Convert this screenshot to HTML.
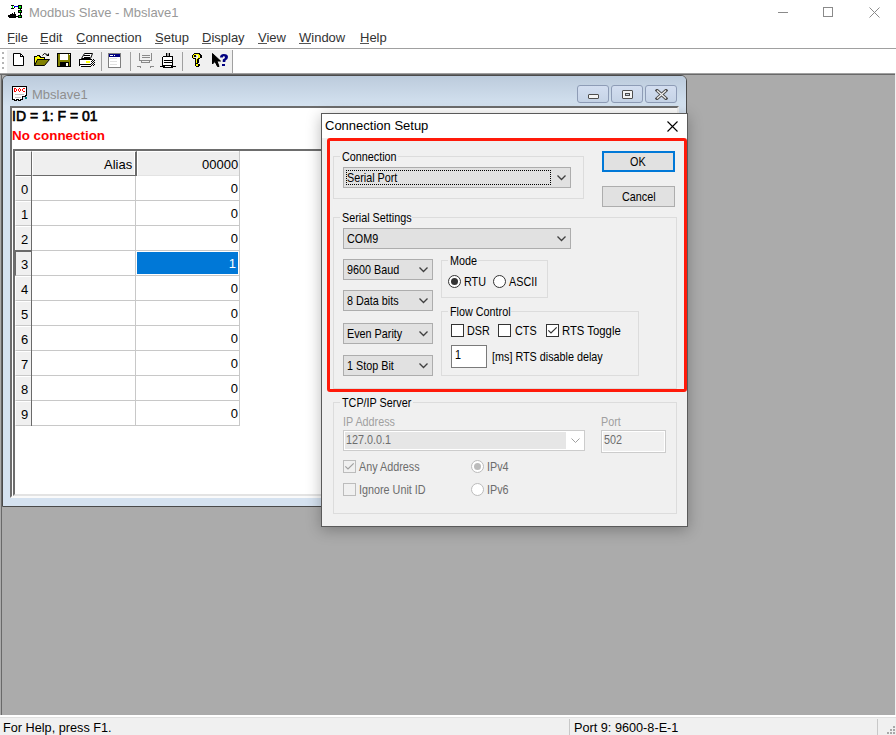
<!DOCTYPE html>
<html><head><meta charset="utf-8">
<style>
*{box-sizing:border-box}
body{margin:0;width:896px;height:735px;position:relative;overflow:hidden;background:#fff;font-family:"Liberation Sans",sans-serif;color:#000}
.a{position:absolute}
.t{position:absolute;white-space:pre;line-height:1}
.u{text-decoration:underline;text-underline-offset:2px}
.dt{position:absolute;white-space:pre;line-height:1;font-size:13px;transform:translateY(-2px) scaleX(0.83);transform-origin:0 0}
.grp{position:absolute;border:1px solid #dcdcdc}
.lbl{position:absolute;height:12px;background:#f0f0f0}
.combo{position:absolute;height:21px;background:#e1e1e1;border:1px solid #adadad}
.combo .dt{position:absolute}
.chev{position:absolute;right:4px;top:7px}
.focus{position:absolute;border:1px dotted #000}
.chk{position:absolute;width:13px;height:13px;background:#fff;border:1px solid #333}
.chk.dis{border-color:#bcbcbc;background:#f0f0f0}
.radio{position:absolute;width:13px;height:13px;background:#fff;border:1px solid #333;border-radius:50%}
.radio.dis{border-color:#bcbcbc}
.dot{position:absolute;left:2px;top:2px;width:7px;height:7px;border-radius:50%;background:#333}
.cbtn{position:absolute;top:85px;width:32px;height:18px;border:1px solid #8e9cb6;border-radius:3px;background:linear-gradient(#d3def0,#c5d3e6)}
</style></head><body>

<!-- ===== Title bar ===== -->
<div class="t" style="left:29px;top:6px;font-size:13px;color:#999">Modbus Slave - Mbslave1</div>

<svg class="a" style="left:770px;top:0" width="126" height="27">
 <path d="M8 12.5H18" stroke="#8a8a8a" stroke-width="1"/>
 <rect x="53.5" y="7.5" width="9" height="9" fill="none" stroke="#8a8a8a"/>
 <path d="M99.5 7.5L109.5 17.5M109.5 7.5L99.5 17.5" stroke="#8a8a8a" stroke-width="1"/>
</svg>
<!-- ===== Menu ===== -->
<div class="t" style="left:7px;top:31px;font-size:13px;color:#333">File</div>
<div class="t" style="left:40px;top:31px;font-size:13px;color:#333">Edit</div>
<div class="t" style="left:76px;top:31px;font-size:13px;color:#333">Connection</div>
<div class="t" style="left:155px;top:31px;font-size:13px;color:#333">Setup</div>
<div class="t" style="left:202px;top:31px;font-size:13px;color:#333">Display</div>
<div class="t" style="left:258px;top:31px;font-size:13px;color:#333">View</div>
<div class="t" style="left:299px;top:31px;font-size:13px;color:#333">Window</div>
<div class="t" style="left:360px;top:31px;font-size:13px;color:#333">Help</div>
<div class="a" style="left:8px;top:43px;width:7px;height:1px;background:#555"></div>
<div class="a" style="left:40px;top:43px;width:8px;height:1px;background:#555"></div>
<div class="a" style="left:77px;top:43px;width:9px;height:1px;background:#555"></div>
<div class="a" style="left:155px;top:43px;width:8px;height:1px;background:#555"></div>
<div class="a" style="left:202px;top:43px;width:9px;height:1px;background:#555"></div>
<div class="a" style="left:258px;top:43px;width:9px;height:1px;background:#555"></div>
<div class="a" style="left:299px;top:43px;width:12px;height:1px;background:#555"></div>
<div class="a" style="left:360px;top:43px;width:9px;height:1px;background:#555"></div>
<div class="a" style="left:0;top:48px;width:896px;height:1px;background:#a0a0a0"></div>

<!-- ===== Toolbar ===== -->
<div class="a" style="left:7px;top:50px;width:226px;height:23px;background:#f0f0f0"></div>
<div class="a" style="left:232px;top:50px;width:1px;height:23px;background:#a0a0a0"></div>

<!-- toolbar icons -->
<svg class="a" style="left:0;top:0" width="240" height="73" shape-rendering="crispEdges">
 <!-- gripper -->
 <g fill="#b4b4b4"><rect x="2" y="52" width="2" height="2"/><rect x="2" y="57" width="2" height="2"/><rect x="2" y="62" width="2" height="2"/><rect x="2" y="67" width="2" height="2"/></g>
 <!-- app icon (title) -->
 <g fill="#000">
  <rect x="11" y="5" width="3" height="1"/><rect x="11" y="8" width="3" height="1"/>
  <rect x="18" y="5" width="4" height="4"/><rect x="20" y="9" width="1" height="1"/>
  <rect x="18" y="10" width="4" height="3"/><rect x="20" y="13" width="1" height="2"/>
  <rect x="18" y="15" width="4" height="3"/>
  <rect x="14" y="7" width="1" height="1"/>
  <path d="M8 15H10V14H12V13H13V14H14V12H15V14H16V16H18V17H16V18H9V17H8Z"/>
 </g>
 <rect x="14" y="6" width="4" height="1" fill="#0000ff"/>
 <g fill="#00ff00"><rect x="12" y="6" width="1" height="2"/><rect x="19" y="6" width="2" height="2"/><rect x="19" y="11" width="2" height="1"/><rect x="19" y="16" width="2" height="1"/></g>
 <!-- new doc -->
 <path d="M13.5 53.5H20.5L23.5 56.5V65.5H13.5Z" fill="#fff" stroke="#000" shape-rendering="auto"/>
 <path d="M20.5 53.5V56.5H23.5" fill="none" stroke="#000"/>
 <!-- open folder -->
 <path d="M34.5 56.5H36.5L37.5 55.5H39.5L40.5 57.5H44.5V59.5H37.5L35 65.5H34.5Z" fill="#ffff00" stroke="#000"/>
 <path d="M37.5 59.5H49.5L44.5 65.5H34.5Z" fill="#808000" stroke="#000" shape-rendering="auto"/>
 <path d="M42.5 55.5Q44 52 47 54.5" fill="none" stroke="#000" shape-rendering="auto"/>
 <path d="M46 56H49V53Z" fill="#000" shape-rendering="auto"/>
 <!-- floppy -->
 <rect x="57" y="53" width="14" height="14" fill="#000"/>
 <rect x="58" y="54" width="12" height="12" fill="#808000"/>
 <rect x="60" y="54" width="8" height="6" fill="#fff"/>
 <rect x="60" y="62" width="9" height="5" fill="#000"/>
 <rect x="66" y="63" width="2" height="3" fill="#fff"/>
 <rect x="69" y="54" width="1" height="1" fill="#fff"/>
 <!-- printer -->
 <path d="M84.5 53.5H92.5L90.5 58.5H81.5Z" fill="#fff" stroke="#000" shape-rendering="auto"/>
 <path d="M84 55.5H90M83.5 57H89.5" stroke="#000" fill="none"/>
 <rect x="79" y="59" width="12" height="1" fill="#000"/>
 <rect x="79" y="59" width="1" height="7" fill="#000"/>
 <rect x="80" y="60" width="12" height="6" fill="#fff"/>
 <rect x="80" y="64" width="11" height="1" fill="#000"/>
 <rect x="86" y="61" width="4" height="2" fill="#ffff00"/>
 <rect x="81" y="66" width="10" height="1" fill="#000"/>
 <g fill="#000"><rect x="91" y="59" width="1" height="1"/><rect x="93" y="59" width="1" height="1"/><rect x="92" y="60" width="1" height="1"/><rect x="94" y="60" width="1" height="1"/><rect x="91" y="61" width="1" height="1"/><rect x="93" y="61" width="1" height="1"/><rect x="92" y="62" width="1" height="1"/><rect x="94" y="62" width="1" height="1"/><rect x="91" y="63" width="1" height="1"/><rect x="93" y="63" width="1" height="1"/><rect x="92" y="64" width="1" height="1"/><rect x="94" y="64" width="1" height="1"/><rect x="91" y="65" width="1" height="1"/><rect x="93" y="65" width="1" height="1"/></g>
 <!-- separators -->
 <rect x="101" y="52" width="1" height="19" fill="#a0a0a0"/>
 <rect x="130" y="52" width="1" height="19" fill="#a0a0a0"/>
 <rect x="182" y="52" width="1" height="19" fill="#a0a0a0"/>
 <!-- window icon -->
 <rect x="108.5" y="53.5" width="12" height="14" fill="#fff" stroke="#808080"/>
 <rect x="109" y="54" width="11" height="3" fill="#000080"/>
 <rect x="110" y="55" width="3" height="1" fill="#fff"/><rect x="114" y="55" width="1" height="1" fill="#fff"/>
 <g fill="#e0e0e0"><rect x="110" y="58" width="7" height="1"/><rect x="110" y="61" width="7" height="1"/><rect x="110" y="64" width="7" height="1"/></g>
 <!-- disabled device -->
 <g fill="none" stroke="#8a8a8a">
  <path d="M139.5 53V60.5H151.5V53"/><path d="M141.5 55.5H149.5M141.5 57.5H149.5"/>
  <path d="M141.5 60.5V62.5H149.5V60.5"/>
  <path d="M137 66.5H140.5V68M154 66.5H150.5V68"/>
 </g>
 <!-- connector -->
 <g fill="#000">
  <rect x="166" y="53" width="1" height="3"/><rect x="169" y="53" width="1" height="3"/>
  <rect x="163" y="56" width="10" height="1"/>
  <rect x="162" y="57" width="1" height="9"/><rect x="172" y="57" width="1" height="9"/>
  <rect x="164" y="60" width="8" height="1"/><rect x="164" y="62" width="8" height="1"/>
  <rect x="163" y="65" width="10" height="3"/>
  <rect x="160" y="66" width="3" height="1"/><rect x="173" y="66" width="3" height="1"/>
 </g>
 <rect x="167" y="53" width="2" height="3" fill="#a0a0a0"/>
 <rect x="163" y="57" width="9" height="3" fill="#fff"/><rect x="163" y="61" width="9" height="1" fill="#fff"/><rect x="163" y="63" width="9" height="2" fill="#fff"/>
 <rect x="165" y="66" width="6" height="1" fill="#fff"/>
 <!-- help ? -->
 <g fill="#000">
  <rect x="194" y="53" width="6" height="1"/>
  <rect x="193" y="54" width="1" height="1"/><rect x="199" y="54" width="2" height="1"/>
  <rect x="192" y="55" width="1" height="3"/><rect x="200" y="55" width="2" height="3"/>
  <rect x="194" y="55" width="2" height="2"/>
  <rect x="193" y="58" width="2" height="1"/><rect x="198" y="58" width="2" height="1"/>
  <rect x="195" y="58" width="1" height="6"/><rect x="197" y="59" width="2" height="4"/>
  <rect x="195" y="63" width="3" height="1"/>
  <rect x="195" y="64" width="1" height="2"/><rect x="198" y="64" width="2" height="2"/>
  <rect x="196" y="66" width="3" height="1"/>
 </g>
 <g fill="#ffff00">
  <rect x="194" y="54" width="5" height="1"/>
  <rect x="193" y="55" width="1" height="3"/>
  <rect x="198" y="55" width="2" height="3"/>
  <rect x="197" y="58" width="1" height="1"/>
  <rect x="196" y="59" width="1" height="4"/>
  <rect x="196" y="64" width="2" height="2"/>
 </g>
 <rect x="196" y="56" width="1" height="1" fill="#c8c8c8"/>
 <!-- context help -->
 <path d="M212.5 53.5V64L215 61.5L217.5 66.5H219L217 61H220.5Z" fill="#000" stroke="#000" shape-rendering="auto"/>
 <path d="M220 57.5Q220 54 223.8 54Q228 54 228 57Q228 59.3 225.5 60.5L225.3 62H222.7L222.8 59.5Q225 58.5 225 57.3Q225 56.3 223.8 56.3Q222.8 56.3 222.8 57.5Z" fill="#000080" shape-rendering="auto"/>
 <rect x="222" y="63.5" width="3" height="2" fill="#000080"/>
</svg>
<!-- ===== MDI client ===== -->
<div class="a" style="left:0;top:73px;width:896px;height:642px;background:#ababab"></div>
<div class="a" style="left:0;top:73px;width:896px;height:1px;background:#a0a0a0"></div>
<div class="a" style="left:0;top:74px;width:896px;height:1px;background:#696969"></div>
<div class="a" style="left:1px;top:74px;width:1px;height:641px;background:#696969"></div>

<!-- ===== MDI child ===== -->
<div class="a" style="left:2px;top:75px;width:685px;height:432px;background:#d5e2f0;border:1px solid #4a4a4a;border-radius:6px 6px 0 0"></div>
<div class="a" style="left:3px;top:76px;width:683px;height:30px;background:linear-gradient(#bccbdc,#d4e2f0);border-radius:5px 5px 0 0"></div>
<div class="t" style="left:32px;top:88px;font-size:13px;color:#8f8f8f">Mbslave1</div>
<svg class="a" style="left:0;top:80px" width="40" height="26" shape-rendering="crispEdges">
 <path d="M12.5 6.5H26.5V15.5L25.5 15.5V16.5H22.5V19.5H20.5V20.5H18.5V19.5H16.5V20.5H14.5V19.5H12.5Z" fill="#fff" stroke="#000"/>
 <g fill="#ff0000">
  <rect x="14" y="8" width="1" height="4"/><rect x="15" y="8" width="1" height="1"/><rect x="15" y="11" width="1" height="1"/><rect x="16" y="9" width="1" height="2"/>
  <rect x="19" y="8" width="1" height="1"/><rect x="18" y="9" width="1" height="2"/><rect x="20" y="9" width="1" height="2"/><rect x="19" y="11" width="1" height="1"/>
  <rect x="23" y="8" width="2" height="1"/><rect x="22" y="9" width="1" height="2"/><rect x="23" y="11" width="2" height="1"/>
 </g>
 <g fill="#c0c0c0"><rect x="15" y="14" width="9" height="1"/><rect x="15" y="17" width="6" height="1"/></g>
 <rect x="25" y="17" width="2" height="2" fill="#008080"/>
</svg>
<div class="cbtn" style="left:577px"><div class="a" style="left:10px;top:8px;width:11px;height:5px;border:1px solid #4e4e4e;background:#f4f4f4;border-radius:1px"></div></div>
<div class="cbtn" style="left:611px"><div class="a" style="left:10px;top:4px;width:11px;height:9px;border:1px solid #4e4e4e;background:#f4f4f4;border-radius:1px"><div class="a" style="left:2px;top:2px;width:5px;height:3px;border:1px solid #4e4e4e;background:#c8d4e4"></div></div></div>
<div class="cbtn" style="left:645px"><svg class="a" style="left:9px;top:3px" width="13" height="11"><path d="M2 1.5L11 9.5M11 1.5L2 9.5" stroke="#4e4e4e" stroke-width="3.2" stroke-linecap="square"/><path d="M2 1.5L11 9.5M11 1.5L2 9.5" stroke="#f4f4f4" stroke-width="1.2"/></svg></div>

<div class="a" style="left:10px;top:106px;width:669px;height:392px;background:#fff;border-top:2px solid #6d6d6d;border-left:2px solid #6d6d6d;border-bottom:2px solid #fafafa;border-right:2px solid #f0f0f0"></div>
<div class="t" style="left:12px;top:109px;font-size:14px;-webkit-text-stroke:0.6px #000">ID = 1: F = 01</div>
<div class="t" style="left:12px;top:129px;font-size:13.4px;font-weight:bold;color:#ff0000">No connection</div>

<!-- ===== Grid ===== -->
<div class="a" style="left:13px;top:149px;width:664px;height:347px;border-top:2px solid #6d6d6d;border-left:2px solid #6d6d6d;border-bottom:2px solid #e3e3e3;border-right:2px solid #e3e3e3"></div>
<div class="a" style="left:15px;top:151px;width:17px;height:25px;background:#efefef;border-top:1px solid #fff;border-left:1px solid #fff;border-right:1px solid #6a6a6a;border-bottom:1px solid #6a6a6a"></div>
<div class="a" style="left:32px;top:151px;width:105px;height:25px;background:#efefef;border-top:1px solid #fff;border-left:1px solid #fff;border-right:2px solid #6a6a6a;border-bottom:1px solid #6a6a6a;box-shadow:inset -1px 0 0 #fff"></div>
<div class="a" style="left:137px;top:151px;width:103px;height:25px;background:#efefef;border-top:1px solid #fff;border-left:1px solid #fff;border-right:1px solid #d0d0d0;border-bottom:1px solid #e3e3e3"></div>
<div class="t" style="left:104px;top:158px;font-size:13px">Alias</div>
<div class="t" style="left:202px;top:158px;font-size:13px">00000</div>
<div class="a" style="left:31px;top:176px;width:1px;height:250px;background:#6a6a6a"></div>
<div class="a" style="left:135px;top:176px;width:1px;height:250px;background:#c8c8c8"></div>
<div class="a" style="left:239px;top:151px;width:1px;height:275px;background:#c8c8c8"></div>
<div class="a" style="left:32px;top:200px;width:208px;height:1px;background:#c8c8c8"></div>
<div class="a" style="left:32px;top:225px;width:208px;height:1px;background:#c8c8c8"></div>
<div class="a" style="left:32px;top:250px;width:208px;height:1px;background:#c8c8c8"></div>
<div class="a" style="left:32px;top:275px;width:208px;height:1px;background:#c8c8c8"></div>
<div class="a" style="left:32px;top:300px;width:208px;height:1px;background:#c8c8c8"></div>
<div class="a" style="left:32px;top:325px;width:208px;height:1px;background:#c8c8c8"></div>
<div class="a" style="left:32px;top:350px;width:208px;height:1px;background:#c8c8c8"></div>
<div class="a" style="left:32px;top:375px;width:208px;height:1px;background:#c8c8c8"></div>
<div class="a" style="left:32px;top:400px;width:208px;height:1px;background:#c8c8c8"></div>
<div class="a" style="left:32px;top:425px;width:208px;height:1px;background:#c8c8c8"></div>
<div class="a" style="left:137px;top:252px;width:101px;height:22px;background:#0078d7"></div>
<div class="a" style="left:15px;top:176px;width:16px;height:25px;background:#f0f0f0;border-top:1px solid #fff;border-left:1px solid #fff;border-bottom:1px solid #c8c8c8"></div>
<div class="t" style="left:21px;top:183px;font-size:13px">0</div>
<div class="t" style="left:200px;top:182px;font-size:13px;width:38px;text-align:right">0</div>
<div class="a" style="left:15px;top:201px;width:16px;height:25px;background:#f0f0f0;border-top:1px solid #fff;border-left:1px solid #fff;border-bottom:1px solid #c8c8c8"></div>
<div class="t" style="left:21px;top:208px;font-size:13px">1</div>
<div class="t" style="left:200px;top:207px;font-size:13px;width:38px;text-align:right">0</div>
<div class="a" style="left:15px;top:226px;width:16px;height:25px;background:#f0f0f0;border-top:1px solid #fff;border-left:1px solid #fff;border-bottom:1px solid #c8c8c8"></div>
<div class="t" style="left:21px;top:233px;font-size:13px">2</div>
<div class="t" style="left:200px;top:232px;font-size:13px;width:38px;text-align:right">0</div>
<div class="a" style="left:15px;top:250px;width:16px;height:26px;background:#f0f0f0;border-top:2px solid #6a6a6a;border-left:1px solid #6a6a6a;border-bottom:1px solid #c8c8c8"></div>
<div class="t" style="left:21px;top:258px;font-size:13px">3</div>
<div class="t" style="left:198px;top:257px;font-size:13px;width:38px;text-align:right;color:#fff">1</div>
<div class="a" style="left:15px;top:276px;width:16px;height:25px;background:#f0f0f0;border-top:1px solid #fff;border-left:1px solid #fff;border-bottom:1px solid #c8c8c8"></div>
<div class="t" style="left:21px;top:283px;font-size:13px">4</div>
<div class="t" style="left:200px;top:282px;font-size:13px;width:38px;text-align:right">0</div>
<div class="a" style="left:15px;top:301px;width:16px;height:25px;background:#f0f0f0;border-top:1px solid #fff;border-left:1px solid #fff;border-bottom:1px solid #c8c8c8"></div>
<div class="t" style="left:21px;top:308px;font-size:13px">5</div>
<div class="t" style="left:200px;top:307px;font-size:13px;width:38px;text-align:right">0</div>
<div class="a" style="left:15px;top:326px;width:16px;height:25px;background:#f0f0f0;border-top:1px solid #fff;border-left:1px solid #fff;border-bottom:1px solid #c8c8c8"></div>
<div class="t" style="left:21px;top:333px;font-size:13px">6</div>
<div class="t" style="left:200px;top:332px;font-size:13px;width:38px;text-align:right">0</div>
<div class="a" style="left:15px;top:351px;width:16px;height:25px;background:#f0f0f0;border-top:1px solid #fff;border-left:1px solid #fff;border-bottom:1px solid #c8c8c8"></div>
<div class="t" style="left:21px;top:358px;font-size:13px">7</div>
<div class="t" style="left:200px;top:357px;font-size:13px;width:38px;text-align:right">0</div>
<div class="a" style="left:15px;top:376px;width:16px;height:25px;background:#f0f0f0;border-top:1px solid #fff;border-left:1px solid #fff;border-bottom:1px solid #c8c8c8"></div>
<div class="t" style="left:21px;top:383px;font-size:13px">8</div>
<div class="t" style="left:200px;top:382px;font-size:13px;width:38px;text-align:right">0</div>
<div class="a" style="left:15px;top:401px;width:16px;height:25px;background:#f0f0f0;border-top:1px solid #fff;border-left:1px solid #fff;border-bottom:1px solid #c8c8c8"></div>
<div class="t" style="left:21px;top:408px;font-size:13px">9</div>
<div class="t" style="left:200px;top:407px;font-size:13px;width:38px;text-align:right">0</div>
<!-- ===== Status bar ===== -->
<div class="a" style="left:0;top:715px;width:896px;height:2px;background:#fff"></div>
<div class="a" style="left:0;top:717px;width:896px;height:1px;background:#e0e0e0"></div>
<div class="a" style="left:0;top:718px;width:896px;height:17px;background:#f0f0f0"></div>
<div class="a" style="left:895px;top:73px;width:1px;height:642px;background:#f0f0f0"></div>
<div class="a" style="left:569px;top:719px;width:1px;height:16px;background:#c8c8c8"></div>
<div class="a" style="left:877px;top:719px;width:1px;height:16px;background:#c8c8c8"></div>
<svg class="a" style="left:880px;top:720px" width="16" height="15" shape-rendering="crispEdges"><g fill="#a8a8a8"><rect x="13" y="6" width="2" height="2"/><rect x="10" y="9" width="2" height="2"/><rect x="13" y="9" width="2" height="2"/><rect x="7" y="12" width="2" height="2"/><rect x="10" y="12" width="2" height="2"/><rect x="13" y="12" width="2" height="2"/></g></svg>
<div class="t" style="left:3px;top:722px;font-size:12.7px">For Help, press F1.</div>
<div class="t" style="left:574px;top:722px;font-size:12.7px">Port 9: 9600-8-E-1</div>

<!-- ===== Dialog ===== -->
<div class="a" style="left:321px;top:113px;width:367px;height:414px;background:#f0f0f0;border:1px solid #5a5a5a;box-shadow:0 3px 14px rgba(0,0,0,0.28)"></div>
<div class="a" style="left:322px;top:114px;width:365px;height:24px;background:#fff"></div>
<div class="t" style="left:325px;top:119px;font-size:13px">Connection Setup</div>
<svg class="a" style="left:667px;top:121px" width="11" height="11"><path d="M0.5 0.5L10.5 10.5M10.5 0.5L0.5 10.5" stroke="#000" stroke-width="1.1"/></svg>

<!-- Connection group -->
<div class="grp" style="left:333px;top:156px;width:251px;height:43px"></div>
<div class="lbl" style="left:340px;top:150px;width:58px"><span class="dt" style="left:2px;top:2px">Connection</span></div>
<div class="combo" style="left:343px;top:167px;width:228px"><div class="focus" style="left:2px;top:2px;width:205px;height:15px"></div><span class="dt" style="left:3px;top:5px">Serial Port</span><svg class="chev" width="9" height="6"><path d="M0.5 0.5L4.5 4.5L8.5 0.5" fill="none" stroke="#404040" stroke-width="1.3"/></svg></div>

<!-- OK / Cancel -->
<div class="a" style="left:602px;top:151px;width:73px;height:21px;background:#e1e1e1;border:2px solid #0078d7"></div>
<span class="dt" style="left:630px;top:157px">OK</span>
<div class="a" style="left:602px;top:186px;width:73px;height:21px;background:#e1e1e1;border:1px solid #adadad"></div>
<span class="dt" style="left:622px;top:192px">Cancel</span>

<!-- Serial settings group -->
<div class="grp" style="left:333px;top:217px;width:344px;height:172px"></div>
<div class="lbl" style="left:340px;top:211px;width:72px"><span class="dt" style="left:2px;top:2px">Serial Settings</span></div>
<div class="combo" style="left:343px;top:228px;width:228px"><span class="dt" style="left:3px;top:5px">COM9</span><svg class="chev" width="9" height="6"><path d="M0.5 0.5L4.5 4.5L8.5 0.5" fill="none" stroke="#404040" stroke-width="1.3"/></svg></div>
<div class="combo" style="left:343px;top:259px;width:90px"><span class="dt" style="left:3px;top:5px">9600 Baud</span><svg class="chev" width="9" height="6"><path d="M0.5 0.5L4.5 4.5L8.5 0.5" fill="none" stroke="#404040" stroke-width="1.3"/></svg></div>
<div class="combo" style="left:343px;top:290px;width:90px"><span class="dt" style="left:3px;top:5px">8 Data bits</span><svg class="chev" width="9" height="6"><path d="M0.5 0.5L4.5 4.5L8.5 0.5" fill="none" stroke="#404040" stroke-width="1.3"/></svg></div>
<div class="combo" style="left:343px;top:323px;width:90px"><span class="dt" style="left:3px;top:5px">Even Parity</span><svg class="chev" width="9" height="6"><path d="M0.5 0.5L4.5 4.5L8.5 0.5" fill="none" stroke="#404040" stroke-width="1.3"/></svg></div>
<div class="combo" style="left:343px;top:355px;width:90px"><span class="dt" style="left:3px;top:5px">1 Stop Bit</span><svg class="chev" width="9" height="6"><path d="M0.5 0.5L4.5 4.5L8.5 0.5" fill="none" stroke="#404040" stroke-width="1.3"/></svg></div>

<!-- Mode -->
<div class="grp" style="left:441px;top:260px;width:107px;height:38px"></div>
<div class="lbl" style="left:448px;top:254px;width:30px"><span class="dt" style="left:2px;top:2px">Mode</span></div>
<div class="radio" style="left:448px;top:275px"><div class="dot"></div></div>
<span class="dt" style="left:464px;top:277px">RTU</span>
<div class="radio" style="left:493px;top:275px"></div>
<span class="dt" style="left:509px;top:277px">ASCII</span>

<!-- Flow control -->
<div class="grp" style="left:441px;top:311px;width:198px;height:65px"></div>
<div class="lbl" style="left:448px;top:305px;width:63px"><span class="dt" style="left:2px;top:2px">Flow Control</span></div>
<div class="chk" style="left:451px;top:324px"></div>
<span class="dt" style="left:467px;top:326px">DSR</span>
<div class="chk" style="left:498px;top:324px"></div>
<span class="dt" style="left:515px;top:326px">CTS</span>
<div class="chk" style="left:546px;top:324px"><svg width="11" height="11" style="position:absolute;left:0;top:0"><path d="M1.3 5.3L4 8L9.7 2.3" fill="none" stroke="#333" stroke-width="1.2"/></svg></div>
<span class="dt" style="left:562px;top:326px;transform:translateY(-2px) scaleX(0.87)">RTS Toggle</span>
<div class="a" style="left:451px;top:345px;width:36px;height:23px;background:#fff;border:1px solid #7a7a7a"></div>
<span class="dt" style="left:455px;top:350px">1</span>
<span class="dt" style="left:492px;top:352px">[ms] RTS disable delay</span>

<!-- Red highlight -->
<div class="a" style="left:327px;top:138px;width:360px;height:254px;border:3px solid #ff1a0a;border-radius:3px"></div>

<!-- TCP/IP -->
<div class="grp" style="left:333px;top:402px;width:344px;height:112px"></div>
<div class="lbl" style="left:340px;top:396px;width:73px"><span class="dt" style="left:2px;top:2px">TCP/IP Server</span></div>
<span class="dt" style="left:343px;top:417px;color:#a0a0a0">IP Address</span>
<div class="a" style="left:343px;top:430px;width:242px;height:21px;background:#fff;border:1px solid #cccccc"><div class="a" style="left:1px;top:1px;width:221px;height:17px;background:#e6e6e6"></div><svg class="chev" width="9" height="6"><path d="M0.5 0.5L4.5 4.5L8.5 0.5" fill="none" stroke="#a0a0a0" stroke-width="1"/></svg></div>
<span class="dt" style="left:346px;top:435px;color:#6d6d6d">127.0.0.1</span>
<span class="dt" style="left:601px;top:417px;color:#a0a0a0">Port</span>
<div class="a" style="left:601px;top:430px;width:65px;height:23px;background:#f0f0f0;border:1px solid #cccccc"><div class="a" style="left:0;top:0;width:63px;height:21px;border:1px solid #fff"></div></div>
<span class="dt" style="left:604px;top:435px;color:#6d6d6d">502</span>
<div class="chk dis" style="left:343px;top:460px"><svg width="11" height="11" style="position:absolute;left:0;top:0"><path d="M1.3 5.3L4 8L9.7 2.3" fill="none" stroke="#a0a0a0" stroke-width="1.2"/></svg></div>
<span class="dt" style="left:359px;top:462px;color:#6d6d6d">Any Address</span>
<div class="chk dis" style="left:343px;top:483px"></div>
<span class="dt" style="left:359px;top:485px;color:#6d6d6d">Ignore Unit ID</span>
<div class="radio dis" style="left:471px;top:460px"><div class="dot" style="background:#bcbcbc"></div></div>
<span class="dt" style="left:487px;top:462px;color:#6d6d6d">IPv4</span>
<div class="radio dis" style="left:471px;top:483px"></div>
<span class="dt" style="left:487px;top:485px;color:#6d6d6d">IPv6</span>

</body></html>
